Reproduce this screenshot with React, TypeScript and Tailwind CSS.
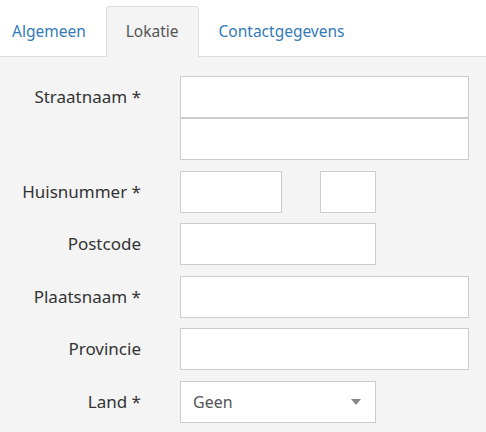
import React, { useState } from 'react';

const tabs = ['Algemeen', 'Lokatie', 'Contactgegevens'];

const inputCls = 'h-[42px] border border-[#cccccc] bg-white px-3 text-[16px] text-[#555] outline-none';

const Row: React.FC<{ label: string; children: React.ReactNode }> = ({ label, children }) => (
  <div className="grid grid-cols-[141px_1fr] gap-x-[39px]">
    <label className="flex h-[42px] items-center justify-end text-[17px] text-[#333]">{label}</label>
    <div>{children}</div>
  </div>
);

const App: React.FC = () => {
  const [active, setActive] = useState('Lokatie');

  return (
    <div className="h-[432px] w-[486px] bg-white font-['Noto_Sans','Open_Sans',sans-serif]">
      {/* Tabs */}
      <div className="flex h-[57px] items-end border-b border-[#dddddd] pt-[6px]">
        <div className="-mb-px ml-[-8px] flex">
          {tabs.map((t) =>
            t === active ? (
              <button
                key={t}
                onClick={() => setActive(t)}
                className="h-[51px] rounded-t-[4px] border border-b-0 border-[#dddddd] bg-[#f4f4f4] px-[19px] text-[15.5px] text-[#555]"
              >
                {t}
              </button>
            ) : (
              <button
                key={t}
                onClick={() => setActive(t)}
                className="h-[51px] border border-transparent px-[19px] text-[15.5px] text-[#337ab7]"
              >
                {t}
              </button>
            )
          )}
        </div>
      </div>

      {/* Form */}
      <div className="flex h-[375px] flex-col gap-[10.5px] bg-[#f4f4f4] pr-[17px] pt-[19px]">
        <Row label="Straatnaam *">
          <div className="flex flex-col">
            <input className={`${inputCls} w-full`} />
            <input className={`${inputCls} w-full`} />
          </div>
        </Row>
        <Row label="Huisnummer *">
          <div className="flex gap-[38px]">
            <input className={`${inputCls} w-[102px]`} />
            <input className={`${inputCls} w-[56px]`} />
          </div>
        </Row>
        <Row label="Postcode">
          <input className={`${inputCls} w-[196px]`} />
        </Row>
        <Row label="Plaatsnaam *">
          <input className={`${inputCls} w-full`} />
        </Row>
        <Row label="Provincie">
          <input className={`${inputCls} w-full`} />
        </Row>
        <Row label="Land *">
          <div className={`${inputCls} flex w-[196px] items-center justify-between`}>
            <span>Geen</span>
            <svg width="10" height="6" viewBox="0 0 10 6" className="mr-[2px]">
              <path d="M0 0 L10 0 L5 6 Z" fill="#888888" />
            </svg>
          </div>
        </Row>
      </div>
    </div>
  );
};

export default App;
